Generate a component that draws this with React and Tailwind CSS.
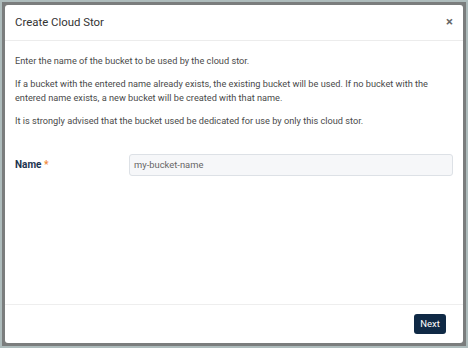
export default function App() {
  return (
    <div className="w-[468px] h-[348px] bg-[#7b7d7d] border-2 border-[#aebcbc] p-[3px] box-border" style={{ fontFamily: 'Roboto, "Liberation Sans", sans-serif' }}>
      <div className="w-full h-full bg-white rounded-[3px] flex flex-col">
        <div className="h-[36px] shrink-0 flex items-center justify-between pl-[10px] pr-[10px] border-b border-[#ececec]">
          <span className="text-[11.4px] text-[#333]">Create Cloud Stor</span>
          <span className="text-[13px] font-bold text-[#666] leading-none -mt-[3px]">×</span>
        </div>
        <div className="flex-1 px-[10px] pt-[13px] text-[9.2px] leading-[14px] text-[#4a4a4a]">
          <p>Enter the name of the bucket to be used by the cloud stor.</p>
          <p className="mt-[9px]">If a bucket with the entered name already exists, the existing bucket will be used. If no bucket with the entered name exists, a new bucket will be created with that name.</p>
          <p className="mt-[9px]">It is strongly advised that the bucket used be dedicated for use by only this cloud stor.</p>
          <div className="flex items-center mt-[26px]">
            <div className="w-[114px] shrink-0 text-[10px] font-bold text-[#1c3350]">
              Name <span className="text-[#f08a3c]">*</span>
            </div>
            <div className="flex-1 h-[22px] rounded-[3px] border border-[#dde1e6] bg-[#f6f7f9] flex items-center px-[4px] text-[9.4px] text-[#666]">
              my-bucket-name
            </div>
          </div>
        </div>
        <div className="h-[39px] shrink-0 border-t border-[#eeeeee] flex items-center justify-end pr-[17px]">
          <button className="h-[20px] w-[32px] rounded-[3px] bg-[#0f2945] text-white text-[9.5px]">Next</button>
        </div>
      </div>
    </div>
  );
}
